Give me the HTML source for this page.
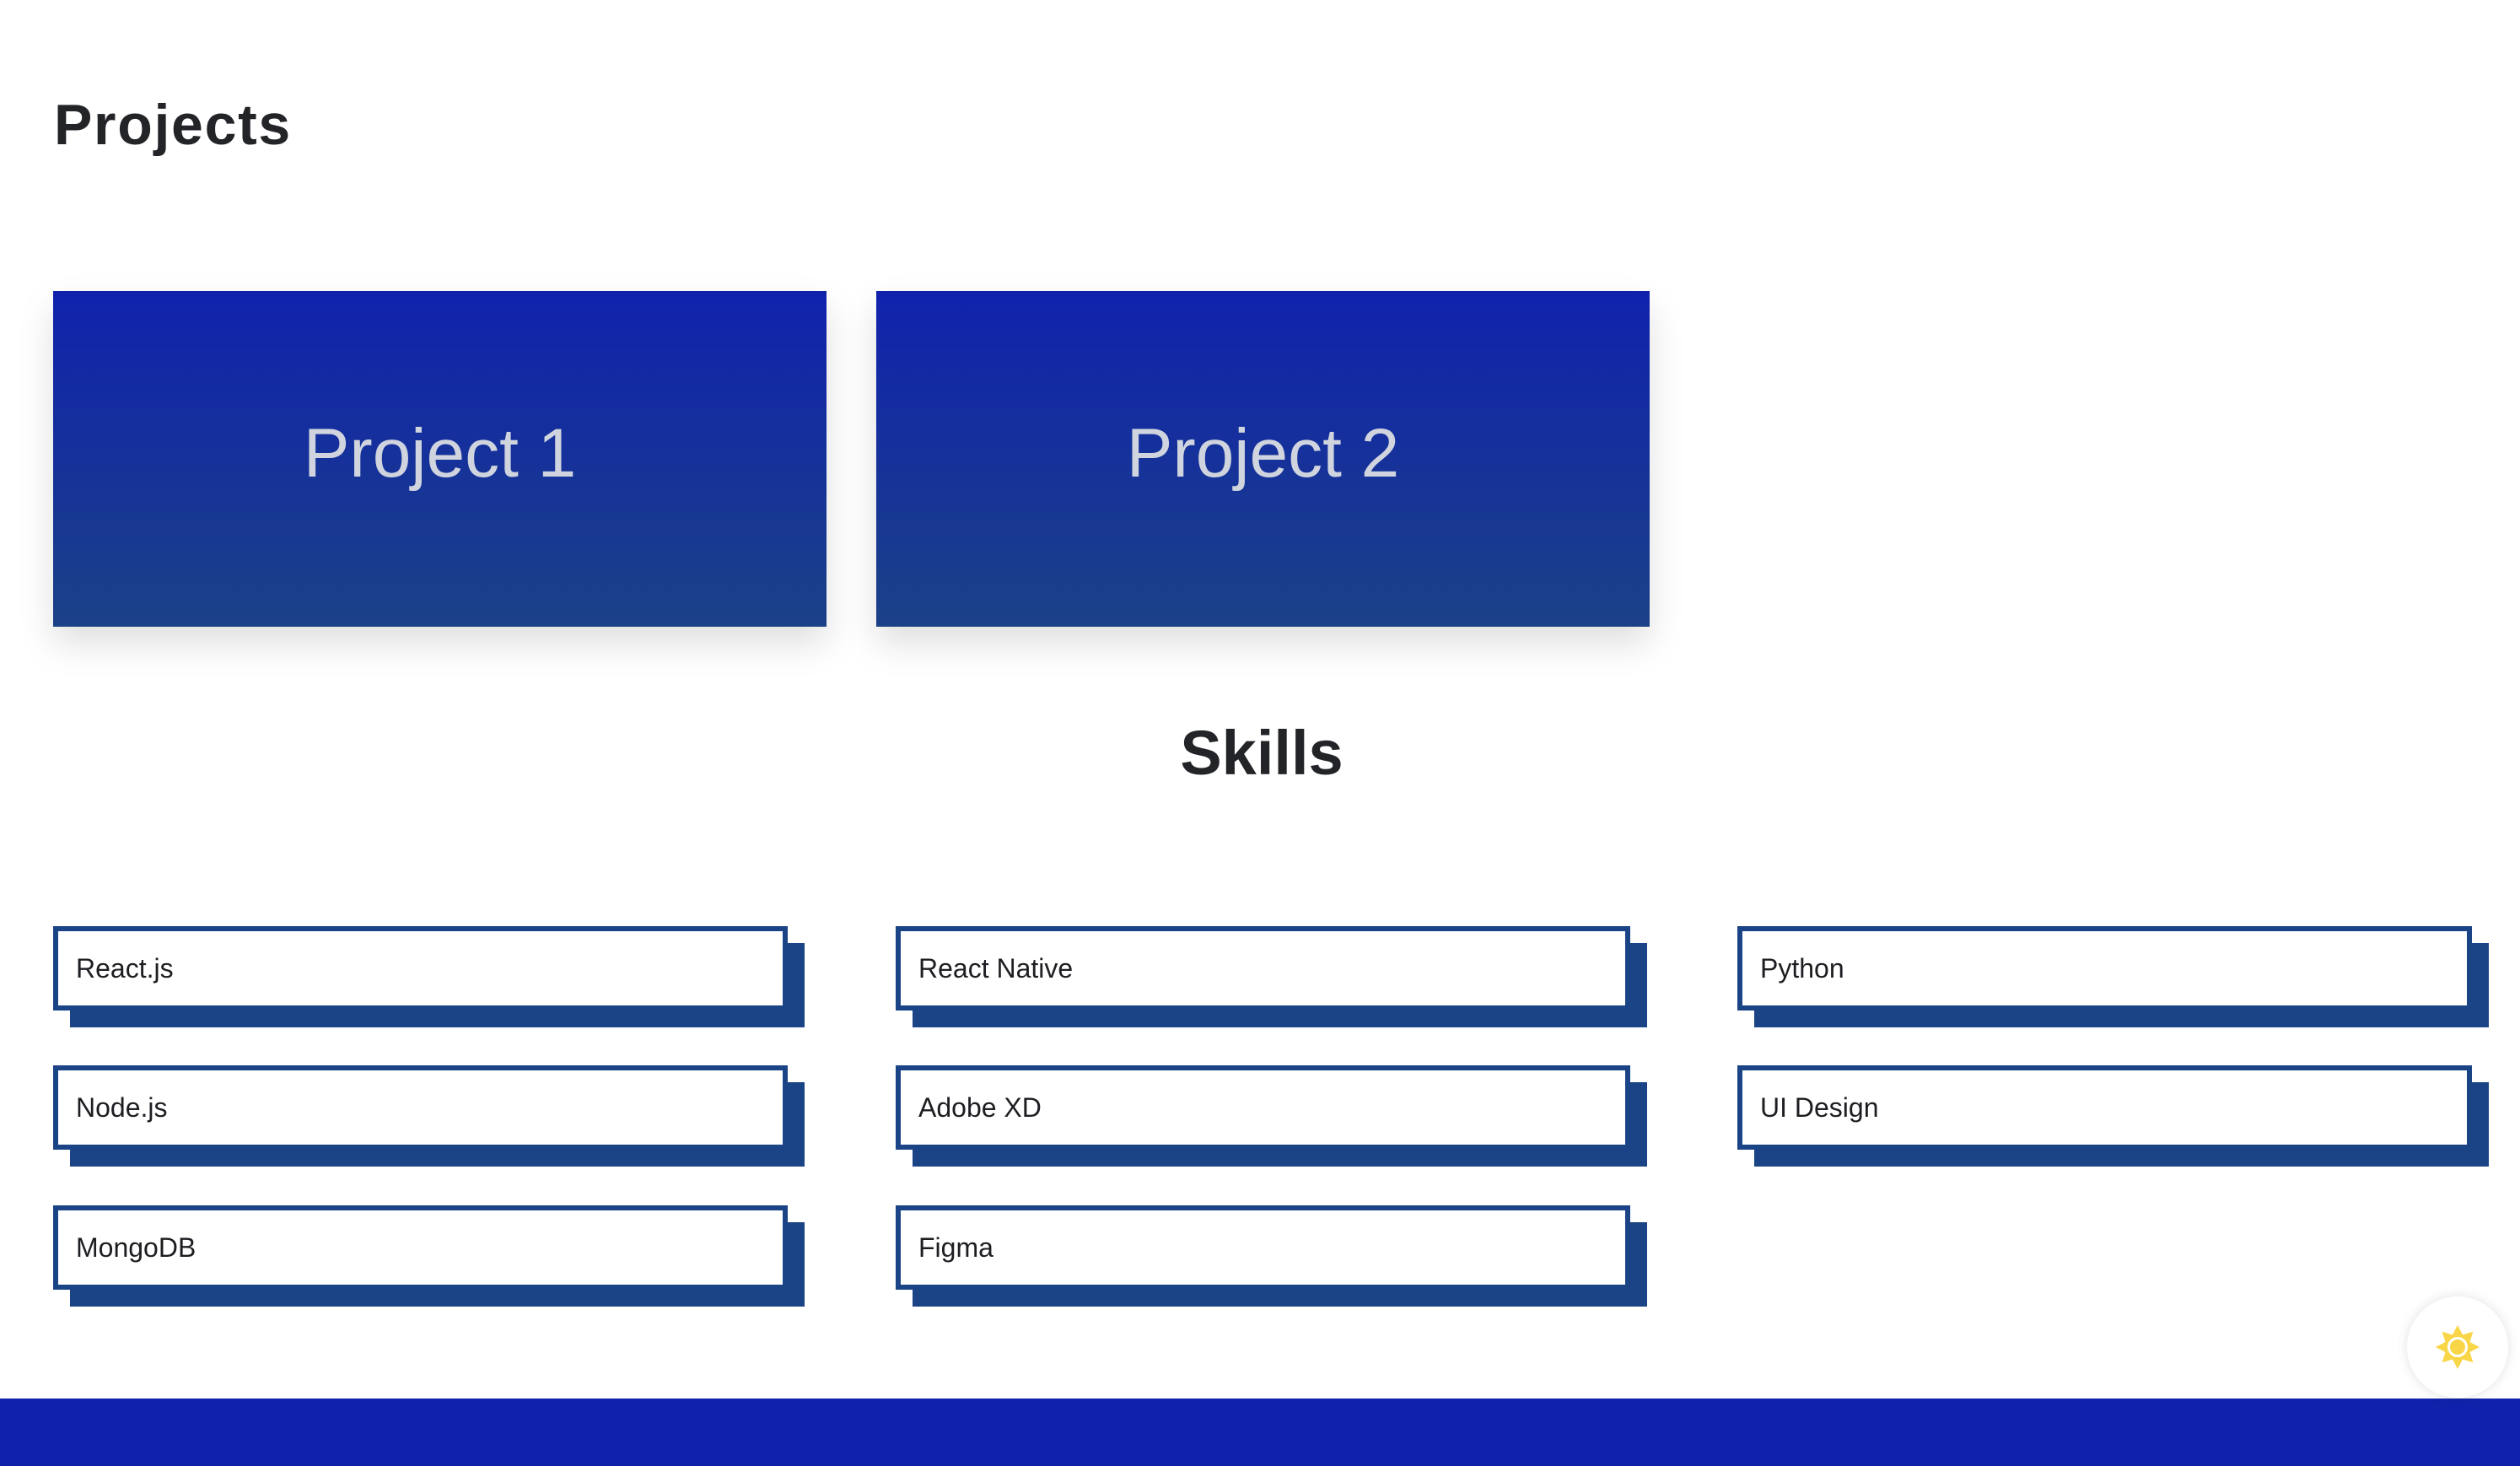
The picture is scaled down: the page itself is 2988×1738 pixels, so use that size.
<!DOCTYPE html>
<html><head><meta charset="utf-8"><style>
*{margin:0;padding:0;box-sizing:border-box}
body{width:2988px;height:1738px;background:#fff;position:relative;overflow:hidden;font-family:"Liberation Sans",sans-serif}
.h{position:absolute;font-weight:bold;color:#222428;line-height:1}
.card{position:absolute;top:345px;width:917px;height:398px;background:linear-gradient(#1022ad,#1b4187);box-shadow:0 20px 40px rgba(0,0,0,.13)}
.card span{position:absolute;left:0;right:0;top:152px;text-align:center;font-size:82px;line-height:1;color:#d0d4de}
.sk{position:absolute;width:891px;height:120px}
.sk .s{position:absolute;left:20px;top:20px;right:0;bottom:0;background:#1b4487}
.sk .b{position:absolute;left:0;top:0;width:871px;height:100px;background:#fff;border:6px solid #1b4487}
.sk .b span{position:absolute;left:21px;top:28px;font-size:32px;line-height:1;color:#1d1e22}
.foot{position:absolute;left:0;top:1658px;width:2988px;height:80px;background:#1022ab}
.btn{position:absolute;left:2854px;top:1537px;width:120px;height:120px;border-radius:50%;background:#fff;box-shadow:0 0 14px rgba(0,0,0,.12)}
</style></head><body>
<div class="h" style="left:64px;top:114px;font-size:68px;letter-spacing:1.7px">Projects</div>
<div class="card" style="left:63px"><span>Project 1</span></div>
<div class="card" style="left:1039px"><span>Project 2</span></div>
<div class="h" style="left:0;width:2992px;text-align:center;top:856px;font-size:74px">Skills</div>

<div class="sk" style="left:63px;top:1098px"><div class="s"></div><div class="b"><span>React.js</span></div></div>
<div class="sk" style="left:1062px;top:1098px"><div class="s"></div><div class="b"><span>React Native</span></div></div>
<div class="sk" style="left:2060px;top:1098px"><div class="s"></div><div class="b"><span>Python</span></div></div>
<div class="sk" style="left:63px;top:1263px"><div class="s"></div><div class="b"><span>Node.js</span></div></div>
<div class="sk" style="left:1062px;top:1263px"><div class="s"></div><div class="b"><span>Adobe XD</span></div></div>
<div class="sk" style="left:2060px;top:1263px"><div class="s"></div><div class="b"><span>UI Design</span></div></div>
<div class="sk" style="left:63px;top:1429px"><div class="s"></div><div class="b"><span>MongoDB</span></div></div>
<div class="sk" style="left:1062px;top:1429px"><div class="s"></div><div class="b"><span>Figma</span></div></div>

<div class="foot"></div>
<div class="btn"><svg width="120" height="120" viewBox="0 0 120 120">
<polygon fill="#f9d648" points="60,34 66,45.5 78.4,41.6 74.5,54 86,60 74.5,66 78.4,78.4 66,74.5 60,86 54,74.5 41.6,78.4 45.5,66 34,60 45.5,54 41.6,41.6 54,45.5"/>
<circle cx="60" cy="60" r="12" fill="#fff"/><circle cx="60" cy="60" r="9" fill="#f9d648"/>
</svg></div>
</body></html>
